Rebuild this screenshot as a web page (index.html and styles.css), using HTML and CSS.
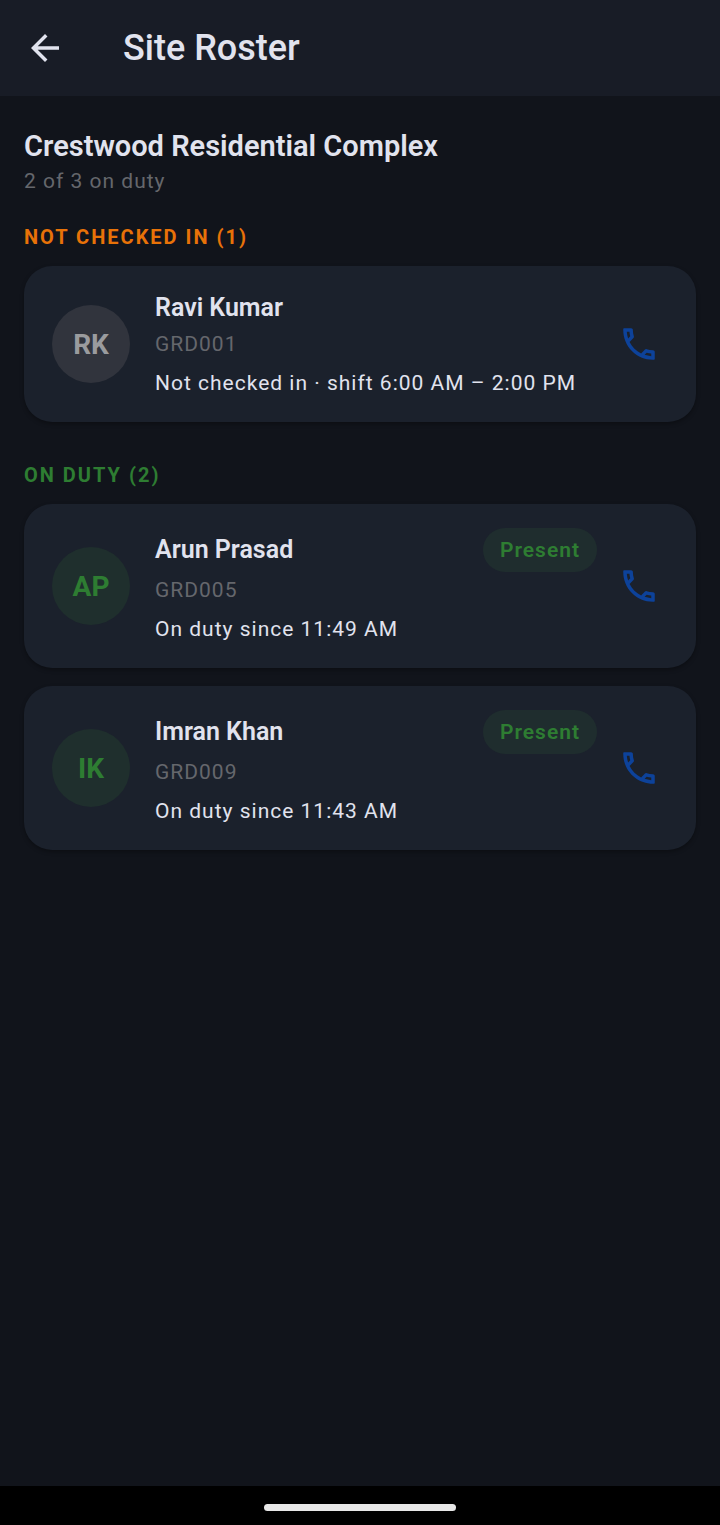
FILE: index.html
```html
<!DOCTYPE html>
<html lang="en">
<head>
  <meta charset="utf-8">
  <meta name="viewport" content="width=device-width, initial-scale=1">
  <title>Site Roster</title>
  <link rel="stylesheet" href="styles.css">
</head>
<body>
  <!-- shared phone icon -->
  <svg class="sprite" aria-hidden="true">
    <symbol id="phone" viewBox="0 0 24 24">
      <path d="M6.54 5c.06.89.21 1.76.45 2.59l-1.2 1.2c-.41-1.2-.67-2.47-.76-3.79h1.51m9.86 12.02c.85.24 1.72.39 2.6.45v1.49c-1.32-.09-2.59-.35-3.8-.75l1.2-1.19M7.5 3H3.4c-.22 0-.4.18-.4.4v.6c0 9.39 7.61 17 17 17h.6c.22 0 .4-.18.4-.4v-4.09c0-.55-.45-1-1-1-1.24 0-2.45-.2-3.57-.57-.1-.04-.21-.05-.31-.05-.26 0-.51.1-.71.29l-2.2 2.2c-2.83-1.45-5.15-3.76-6.59-6.59l2.2-2.2c.28-.28.36-.67.25-1.02C8.7 6.45 8.5 5.25 8.5 4c0-.55-.45-1-1-1z"/>
    </symbol>
  </svg>

  <header class="app-bar">
    <button type="button" class="icon-button back" aria-label="Back">
      <svg viewBox="0 0 24 24"><path d="M20 11H7.83l5.59-5.59L12 4l-8 8 8 8 1.41-1.41L7.83 13H20v-2z"/></svg>
    </button>
    <h1>Site Roster</h1>
  </header>

  <main class="content">
    <h2 class="site-name">Crestwood Residential Complex</h2>
    <p class="summary">2 of 3 on duty</p>

    <section class="group">
      <h3 class="group-title missing">NOT CHECKED IN (1)</h3>
      <article class="card">
        <div class="avatar">RK</div>
        <div class="info">
          <div class="name-row"><h4>Ravi Kumar</h4></div>
          <p class="guard-id">GRD001</p>
          <p class="status">Not checked in · shift 6:00 AM – 2:00 PM</p>
        </div>
        <button type="button" class="icon-button call" aria-label="Call Ravi Kumar"><svg><use href="#phone"/></svg></button>
      </article>
    </section>

    <section class="group">
      <h3 class="group-title present">ON DUTY (2)</h3>
      <article class="card">
        <div class="avatar on-duty">AP</div>
        <div class="info">
          <div class="name-row"><h4>Arun Prasad</h4><span class="badge">Present</span></div>
          <p class="guard-id">GRD005</p>
          <p class="status">On duty since 11:49 AM</p>
        </div>
        <button type="button" class="icon-button call" aria-label="Call Arun Prasad"><svg><use href="#phone"/></svg></button>
      </article>
      <article class="card">
        <div class="avatar on-duty">IK</div>
        <div class="info">
          <div class="name-row"><h4>Imran Khan</h4><span class="badge">Present</span></div>
          <p class="guard-id">GRD009</p>
          <p class="status">On duty since 11:43 AM</p>
        </div>
        <button type="button" class="icon-button call" aria-label="Call Imran Khan"><svg><use href="#phone"/></svg></button>
      </article>
    </section>
  </main>

  <footer class="nav-bar"><div class="home-handle"></div></footer>
</body>
</html>
```
FILE: styles.css
```css
* {
  box-sizing: border-box;
}
body {
  display: flex;
  flex-direction: column;
  min-height: 100vh;
  margin: 0;
  background-color: #11141b;
  color: #e1e3ee;
  font-family: Roboto, "Liberation Sans", sans-serif;
}
h1, h2, h3, h4, p {
  margin: 0;
}
.sprite {
  display: none;
}

/* top bar */
.app-bar {
  display: flex;
  align-items: center;
  gap: 36px;
  height: 96px;
  padding: 0 3px;
  background-color: #181c26;
}
.app-bar h1 {
  font-size: 36px;
  font-weight: 500;
  line-height: 44px;
}
.icon-button {
  display: flex;
  flex: none;
  align-items: center;
  justify-content: center;
  width: 84px;
  height: 84px;
  padding: 0;
  border: none;
  background: none;
  color: inherit;
  cursor: pointer;
}
.icon-button svg {
  width: 42px;
  height: 42px;
  fill: currentColor;
}

/* page content */
.content {
  flex: 1;
  padding: 31px 24px;
}
.site-name {
  font-size: 29px;
  font-weight: 600;
  line-height: 38px;
}
.summary, .guard-id, .status {
  font-size: 21px;
  line-height: 30px;
  letter-spacing: 1px;
}
.summary, .guard-id {
  color: #65676c;
}
.summary {
  margin-top: 1px;
}
.group {
  display: flex;
  flex-direction: column;
  gap: 18px;
  margin-top: 26px;
}
.group + .group {
  margin-top: 38px;
}
.group-title {
  margin-bottom: -4px;
  font-size: 20px;
  font-weight: 700;
  line-height: 30px;
  letter-spacing: 2px;
}
.missing {
  color: #e87208;
}
.present {
  color: #2e7d32;
}

/* guard cards */
.card {
  display: flex;
  align-items: center;
  padding: 24px 15px 24px 28px;
  border-radius: 28px;
  background-color: #1b212c;
  box-shadow: 0 2px 4px rgba(0, 0, 0, 0.3);
}
.avatar {
  display: flex;
  flex: none;
  align-items: center;
  justify-content: center;
  width: 78px;
  height: 78px;
  border-radius: 50%;
  background-color: #31343d;
  color: #9a9b9e;
  font-size: 28px;
  font-weight: 700;
}
.avatar.on-duty {
  background-color: #1f2f2d;
  color: #2e7d32;
}
.info {
  flex: 1;
  min-width: 0;
  margin-left: 25px;
}
.name-row {
  display: flex;
  align-items: center;
  justify-content: space-between;
  margin-bottom: 3px;
}
.name-row h4 {
  font-size: 25px;
  font-weight: 600;
  line-height: 36px;
}
.badge {
  padding: 7px 17px;
  border-radius: 22px;
  background-color: #1f2d2e;
  color: #2e7d32;
  font-size: 21px;
  font-weight: 600;
  line-height: 30px;
  letter-spacing: 1px;
}
.status {
  margin-top: 9px;
}
.call {
  color: #0d429a;
}

/* system navigation area */
.nav-bar {
  display: flex;
  align-items: center;
  justify-content: center;
  height: 39px;
  padding-top: 4px;
  background-color: #000;
}
.home-handle {
  width: 192px;
  height: 7px;
  border-radius: 4px;
  background-color: #e8e8e8;
}
```
